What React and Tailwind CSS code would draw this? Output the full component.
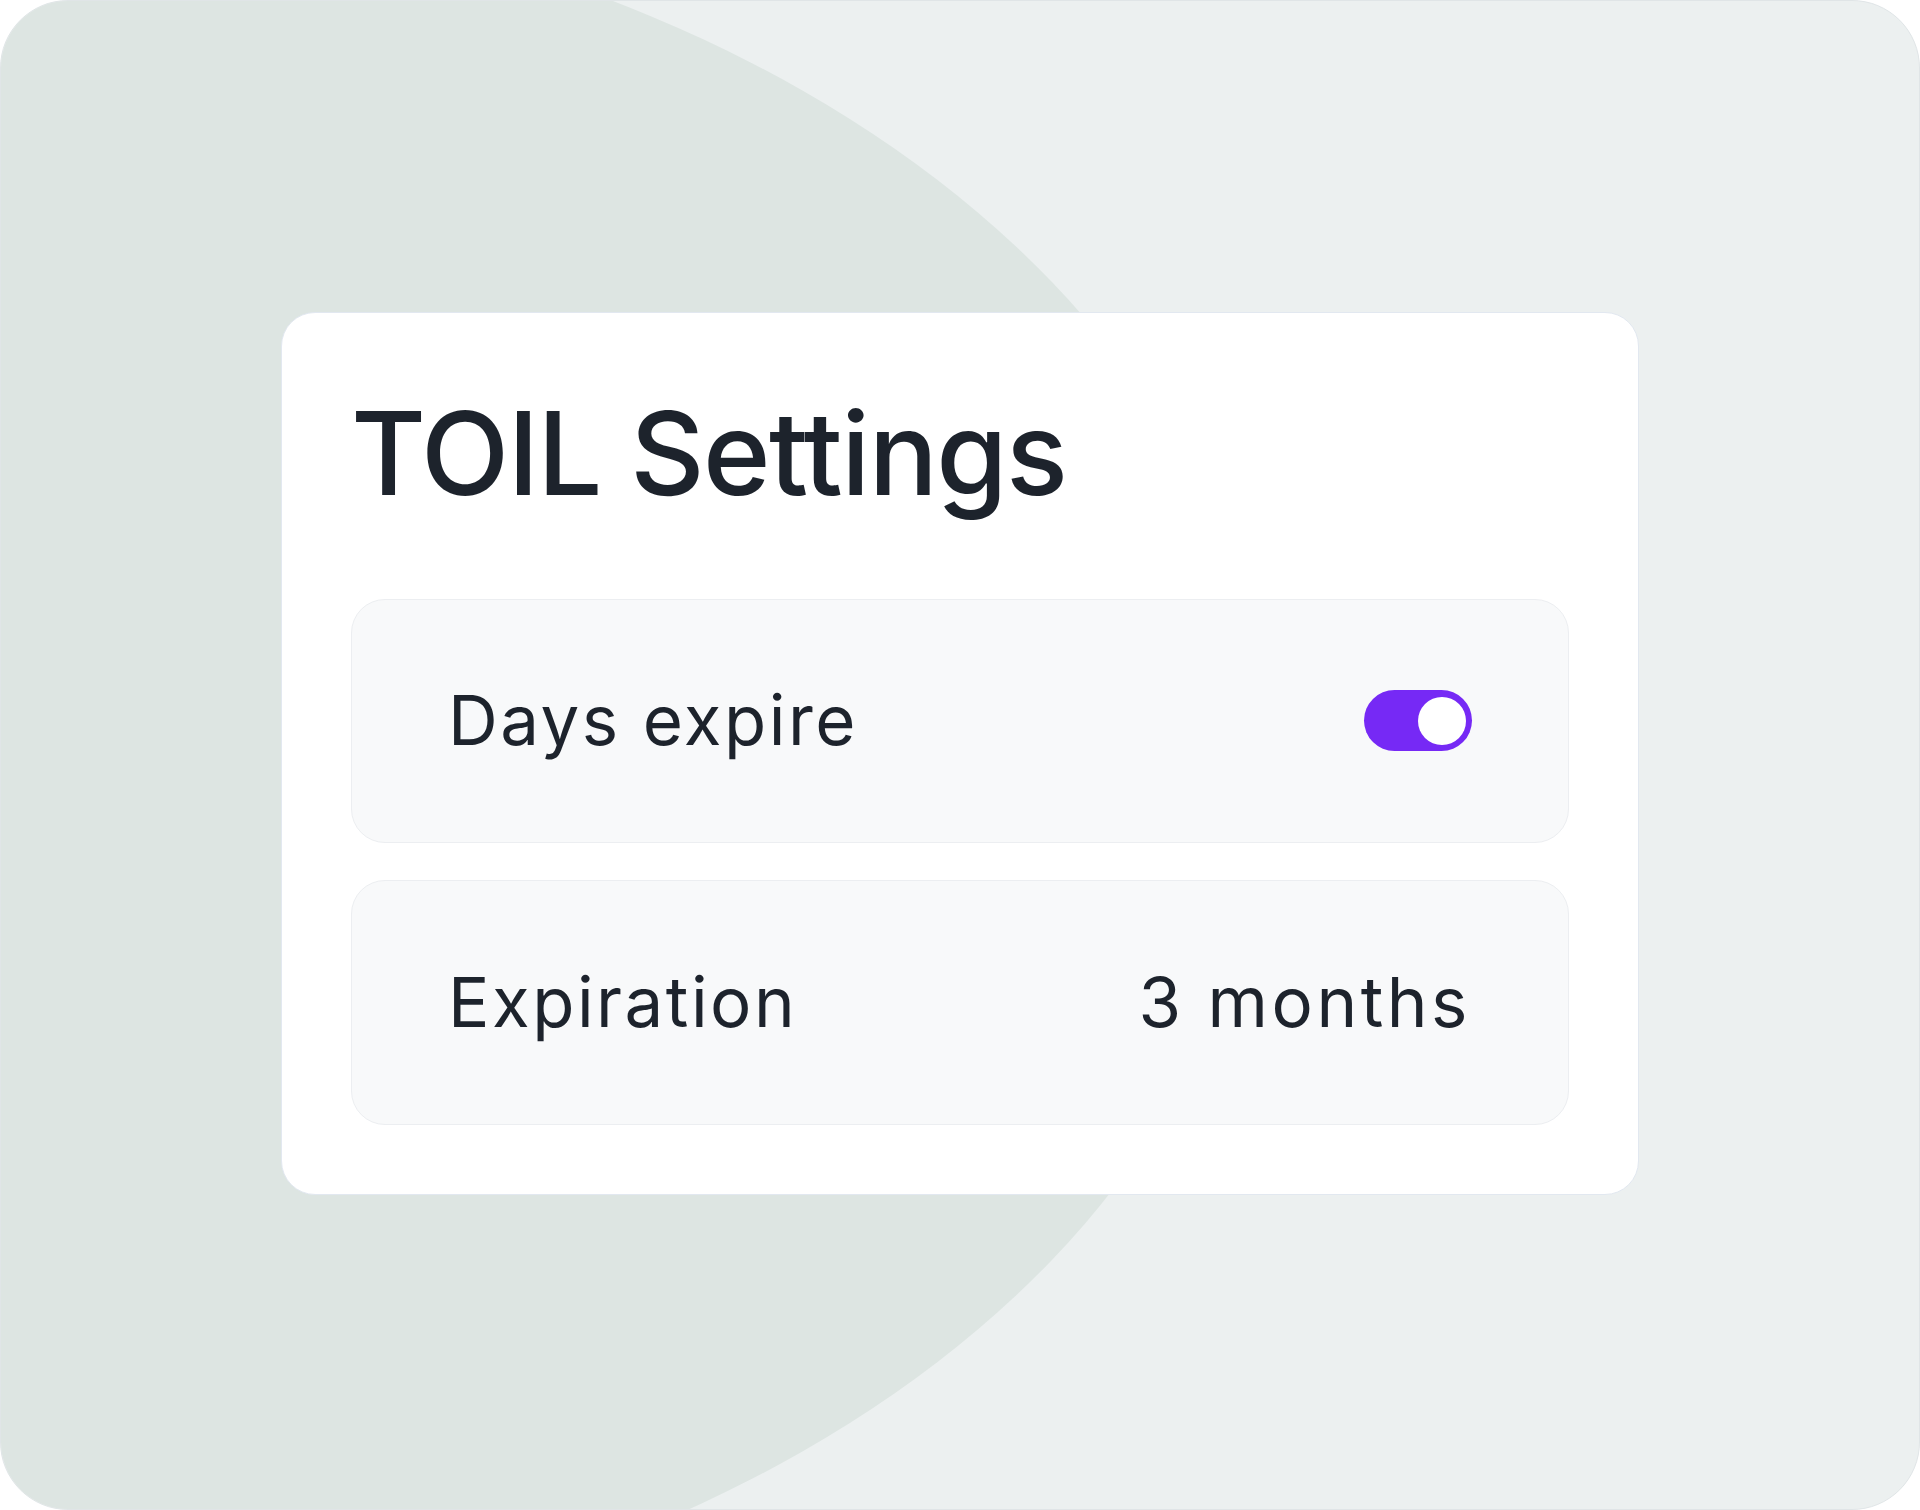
import React from "react";

const rows = [
  { label: "Days expire", toggle: true },
  { label: "Expiration", value: "3 months" },
];

const Toggle = () => (
  <div className="flex h-[61px] w-[108px] items-center justify-end rounded-full bg-[#7629f5] pr-[6px]">
    <div className="h-[48px] w-[48px] rounded-full bg-white" />
  </div>
);

export default function App() {
  return (
    <div className="h-[1510px] w-full bg-white font-[Inter,sans-serif] text-[#1d232c]">
      <div className="relative flex h-full w-full items-center justify-center overflow-hidden rounded-[68px] border border-[#e0e5e7] bg-[#ecf0f0]">
        {/* background blob */}
        <div className="absolute left-[-1264px] top-[-110px] h-[1760px] w-[2528px] rounded-[50%] bg-[#dde5e2]" />

        <div className="relative z-10 mb-[4px] w-[1358px] rounded-[34px] border border-[#e2e8f0] bg-white p-[69px]">
          <h1 className="text-[115px] font-medium leading-[144px] tracking-[-1.5px]">TOIL Settings</h1>

          <div className="mt-[73px] flex flex-col gap-[37px]">
            {rows.map((row) => (
              <div
                key={row.label}
                className={
                  row.toggle
                    ? "flex h-[244px] items-center justify-between rounded-[34px] border border-[#eceef1] bg-[#f8f9fa] pl-[96px] pr-[96px]"
                    : "flex h-[245px] items-center justify-between rounded-[34px] border border-[#eceef1] bg-[#f8f9fa] pl-[96px] pr-[97px]"
                }
              >
                <span className="text-[69px] leading-none tracking-[2.5px]">{row.label}</span>
                {row.toggle ? (
                  <Toggle />
                ) : (
                  <span className="text-[69px] leading-none tracking-[3.5px]">{row.value}</span>
                )}
              </div>
            ))}
          </div>
        </div>
      </div>
    </div>
  );
}
